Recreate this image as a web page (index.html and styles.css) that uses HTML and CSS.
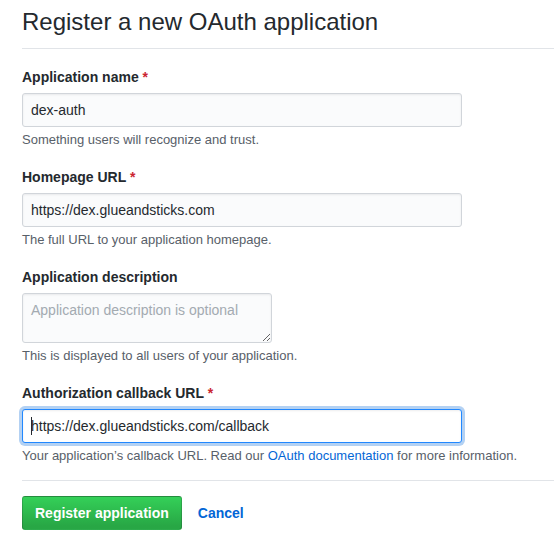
FILE: index.html
```html
<!DOCTYPE html>
<html lang="en">
<head>
<meta charset="utf-8">
<title>Register a new OAuth application</title>
<link rel="stylesheet" href="styles.css">
</head>
<body>
<div class="page">
  <div class="subhead">
    <h2 class="subhead-heading">Register a new OAuth application</h2>
  </div>
  <form class="form">
    <dl class="form-group">
      <dt><label for="name">Application name <span class="req">*</span></label></dt>
      <dd>
        <input id="name" class="form-control" type="text" value="dex-auth">
        <p class="note">Something users will recognize and trust.</p>
      </dd>
    </dl>
    <dl class="form-group">
      <dt><label for="url">Homepage URL <span class="req">*</span></label></dt>
      <dd>
        <input id="url" class="form-control" type="text" value="https://dex.glueandsticks.com">
        <p class="note">The full URL to your application homepage.</p>
      </dd>
    </dl>
    <dl class="form-group">
      <dt><label for="desc">Application description</label></dt>
      <dd>
        <textarea id="desc" class="form-control short" placeholder="Application description is optional"></textarea>
        <p class="note">This is displayed to all users of your application.</p>
      </dd>
    </dl>
    <dl class="form-group last">
      <dt><label for="cb">Authorization callback URL <span class="req">*</span></label></dt>
      <dd>
        <div class="field-wrap">
          <input id="cb" class="form-control focused" type="text" value="https://dex.glueandsticks.com/callback">
          <span class="caret"></span>
        </div>
        <p class="note">Your application’s callback URL. Read our <a href="#" class="link">OAuth documentation</a> for more information.</p>
      </dd>
    </dl>
    <hr class="divider">
    <div class="actions">
      <button type="button" class="btn-primary">Register application</button>
      <a href="#" class="cancel">Cancel</a>
    </div>
  </form>
</div>
</body>
</html>
```
FILE: styles.css
```css
html, body {
  margin: 0;
  padding: 0;
  background: #fff;
}
body {
  font-family: "Liberation Sans", Arial, sans-serif;
  font-size: 14px;
  line-height: 1.5;
  color: #24292e;
}
.page {
  padding-left: 22px;
}
.subhead {
  padding-top: 7px;
  padding-bottom: 11px;
  border-bottom: 1px solid #e1e4e8;
  margin-bottom: 18px;
}
.subhead-heading {
  margin: 0;
  font-size: 24px;
  font-weight: 400;
  line-height: 30px;
  color: #24292e;
}
.form-group {
  margin: 0 0 18px 0;
}
.form-group.last {
  margin-bottom: 0;
}
.form-group dt {
  margin: 0 0 6px 0;
  line-height: 20px;
}
.form-group dt label {
  font-weight: 700;
  font-size: 14px;
}
.req {
  color: #cb2431;
}
.form-group dd {
  margin: 0;
}
.form-control {
  box-sizing: border-box;
  display: block;
  width: 440px;
  min-height: 34px;
  padding: 6px 8px;
  font-family: "Liberation Sans", Arial, sans-serif;
  font-size: 14px;
  line-height: 20px;
  color: #24292e;
  background-color: #fafbfc;
  border: 1px solid #d1d5da;
  border-radius: 3px;
  box-shadow: inset 0 1px 2px rgba(27, 31, 35, 0.075);
  outline: none;
  margin: 0;
}
.form-control.short {
  width: 250px;
  height: 50px;
  resize: vertical;
}
.form-control::placeholder {
  color: #a3aab1;
}
.form-control.focused {
  background-color: #fff;
  border-color: #2188ff;
  box-shadow: inset 0 1px 2px rgba(27, 31, 35, 0.075), 0 0 0 3px rgba(3, 102, 214, 0.3);
}
.field-wrap {
  position: relative;
  width: 440px;
}
.caret {
  position: absolute;
  left: 9px;
  top: 8px;
  width: 1px;
  height: 18px;
  background: #24292e;
}
.note {
  margin: 4px 0 0 0;
  font-size: 13px;
  line-height: 18px;
  color: #586069;
}
.link {
  color: #0366d6;
  text-decoration: none;
}
.divider {
  margin: 15px 0 15px 0;
  height: 0;
  border: 0;
  border-top: 1px solid #e1e4e8;
}
.actions {
  display: flex;
  align-items: center;
}
.btn-primary {
  box-sizing: border-box;
  height: 34px;
  padding: 6px 12px;
  font-family: "Liberation Sans", Arial, sans-serif;
  font-size: 14px;
  font-weight: 700;
  line-height: 20px;
  color: #fff;
  background-color: #28a745;
  background-image: linear-gradient(-180deg, #34d058 0%, #28a745 90%);
  border: 1px solid rgba(27, 31, 35, 0.2);
  border-radius: 3px;
  cursor: pointer;
}
.cancel {
  margin-left: 16px;
  font-weight: 700;
  font-size: 14px;
  color: #0366d6;
  text-decoration: none;
}
```
